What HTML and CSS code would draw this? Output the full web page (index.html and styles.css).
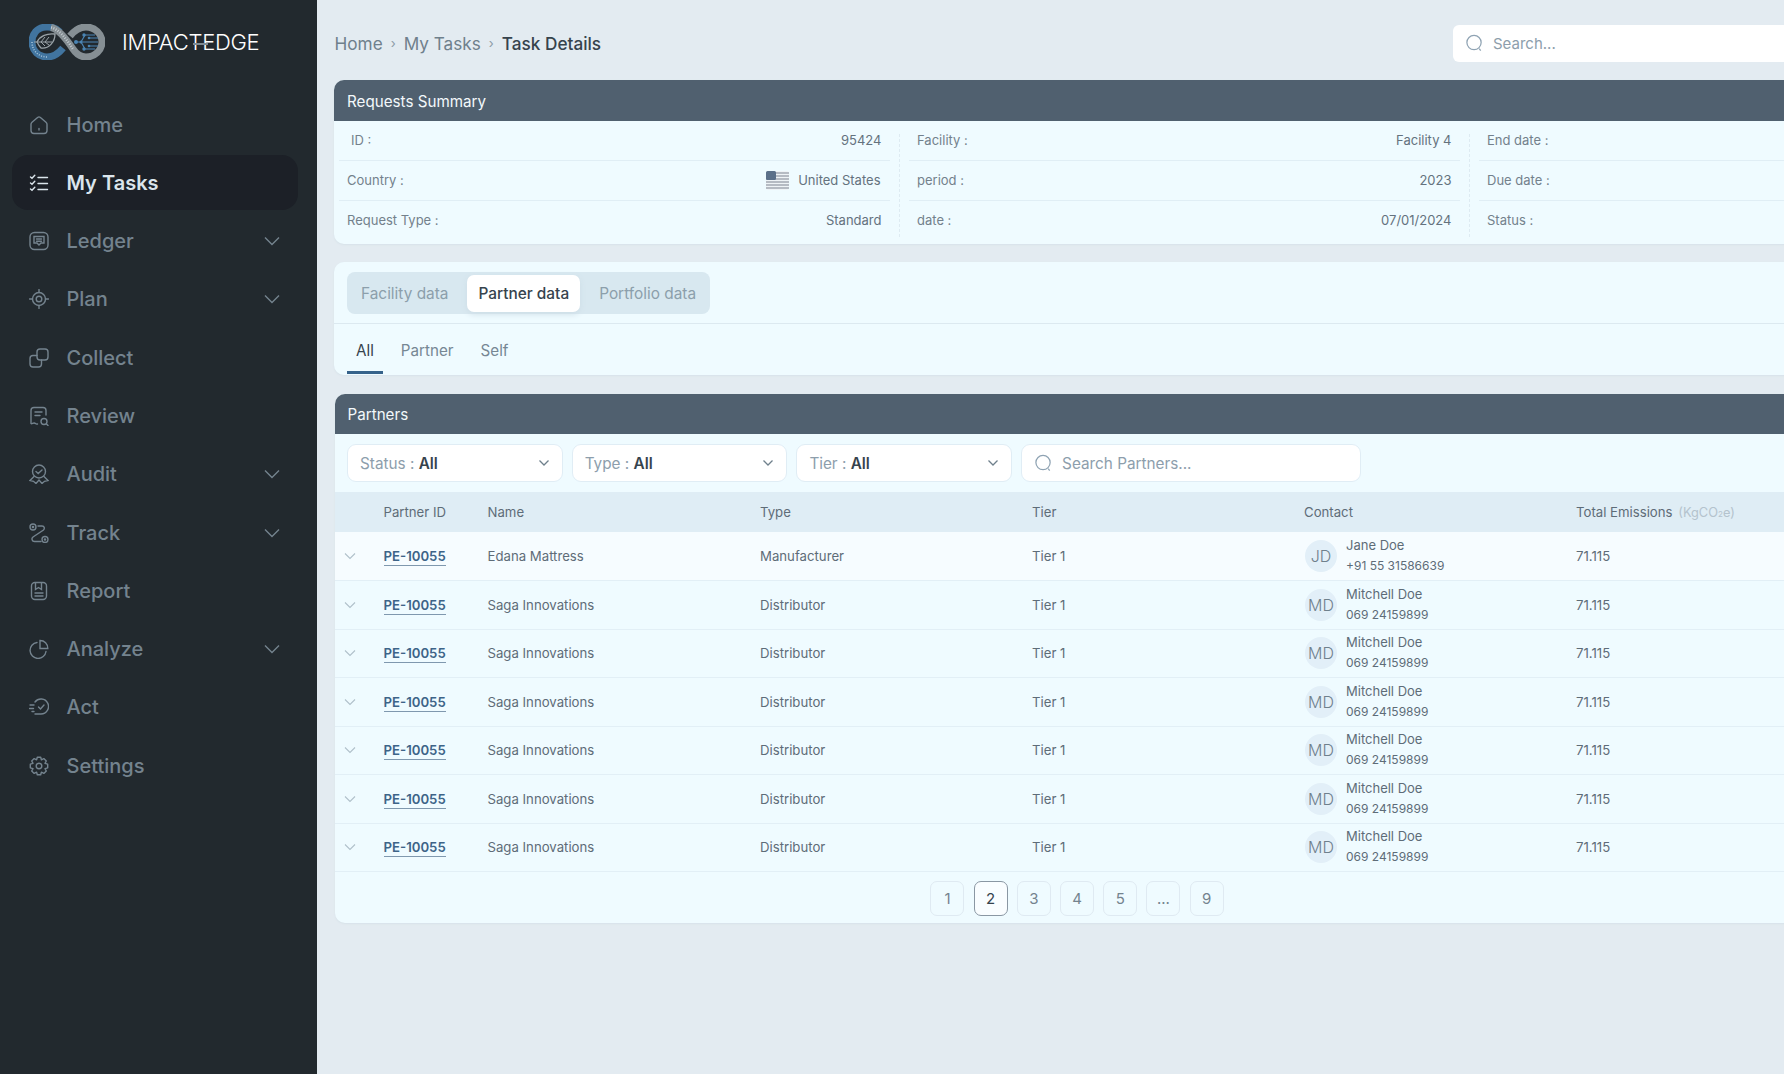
FILE: index.html
```html
<!DOCTYPE html>
<html lang="en">
<head>
<meta charset="utf-8">
<title>Task Details</title>
<link rel="stylesheet" href="styles.css">
</head>
<body>
<aside class="sidebar">
  <div class="brand">
    <svg class="logo" viewBox="0 0 76 36" fill="none">
      <path d="M31 8C27 4 22 2.500 17 3C8 3.500 3 10 3 18C3 27 10 33 18 33C25 33 30 29 34 24" stroke="#41749f" stroke-width="7"/>
      <path d="M22 3.500C30 5 38 16 44 25C48 31 52 33 57 33C66 33 73 26 73 18C73 10 66 3 57 3C50 3 45 7 41 12" stroke="#868f94" stroke-width="7"/>
      <path d="M22 3.500C30 5 38 16 44 25" stroke="#c3cbd0" stroke-width="2.500" stroke-dasharray="1 1.500"/>
      <path d="M3 18C3 27 10 33 18 33" stroke="#a9c6dc" stroke-width="1.500" stroke-dasharray="1 1.500"/>
      <path d="M8 18C11 12 18 9 26 10C26 18 20 25 12 24C10 22 9 20 8 18Z" stroke="#9aa3a8" stroke-width="1.300"/>
      <path d="M5 18H23M12 18L16 13M16 18L20 13M12 18L16 22M16 18L20 21" stroke="#9aa3a8" stroke-width="1"/>
      <path d="M47 18H69M52 18L56 11H66M52 18L56 25H66M59 14H69M59 22H69" stroke="#4a84b3" stroke-width="1.200"/>
      <g fill="#4a84b3"><circle cx="47" cy="18" r="2"/><circle cx="55" cy="11" r="1.700"/><circle cx="55" cy="25" r="1.700"/><circle cx="60" cy="14" r="1.300"/><circle cx="60" cy="22" r="1.300"/><circle cx="52" cy="18" r="1.500"/></g>
    </svg>
    <span class="brand-name">IMPACTEDGE</span>
  </div>
  <nav class="nav">
    <a class="nav-item"><svg class="nav-icon" viewBox="0 0 20 20"><path d="M2 9.200C2 8.300 2.400 7.700 3 7.200L8.600 2.500C9.400 1.800 10.600 1.800 11.400 2.500L17 7.200C17.600 7.700 18 8.300 18 9.200V15.500C18 17 17 18.500 15 18.500H5C3 18.500 2 17 2 15.500Z"/><path d="M10 13.500V15"/></svg><span>Home</span></a>
    <a class="nav-item is-active"><svg class="nav-icon" viewBox="0 0 20 20"><path d="M1.500 4L3 5.300 5.800 2.200M1.500 10L3 11.300 5.800 8.200M1.500 16L3 17.300 5.800 14.200M9 4.500H18.500M9 10.500H18.500M9 16.500H18.500"/></svg><span>My Tasks</span></a>
    <a class="nav-item"><svg class="nav-icon" viewBox="0 0 20 20"><rect x="1" y="1.500" width="18" height="17" rx="4.500"/><path d="M5 5.500H15V12H12L10 14 8 12H5ZM7.500 8H12.500M7.500 10.300H12.500"/></svg><span>Ledger</span><svg class="nav-caret" viewBox="0 0 16 10"><path d="M1 1.500L8 8.500 15 1.500"/></svg></a>
    <a class="nav-item"><svg class="nav-icon" viewBox="0 0 20 20"><circle cx="10" cy="10" r="6.500"/><circle cx="10" cy="10" r="2.800"/><path d="M10 .5V3.500M10 16.500V19.500M.5 10H3.500M16.500 10H19.500"/></svg><span>Plan</span><svg class="nav-caret" viewBox="0 0 16 10"><path d="M1 1.500L8 8.500 15 1.500"/></svg></a>
    <a class="nav-item"><svg class="nav-icon" viewBox="0 0 20 20"><rect x="8" y="1" width="11" height="11" rx="3"/><path d="M8 7.500H4C2 7.500 1 8.500 1 10.500V16C1 18 2 19 4 19H9.500C11.500 19 12.500 18 12.500 16V12"/></svg><span>Collect</span></a>
    <a class="nav-item"><svg class="nav-icon" viewBox="0 0 20 20"><path d="M17 9V4.500C17 2.500 16 1.500 14 1.500H5C3 1.500 2 2.500 2 4.500V17.500C3 18.500 4 16.500 5.500 17C6.500 17.300 7 18.500 8.500 18M6 6H13M6 9.500H11"/><circle cx="15" cy="15.500" r="3"/><path d="M17.500 18L19 19.500"/></svg><span>Review</span></a>
    <a class="nav-item"><svg class="nav-icon" viewBox="0 0 20 20"><circle cx="10" cy="7.500" r="6.500"/><path d="M7 7.500L9.200 9.500 13 6M5 12.500L1 16.500 4.500 17.300 7 19.500 10 16 13 19.500 15.500 17.300 19 16.500 15 12.500"/></svg><span>Audit</span><svg class="nav-caret" viewBox="0 0 16 10"><path d="M1 1.500L8 8.500 15 1.500"/></svg></a>
    <a class="nav-item"><svg class="nav-icon" viewBox="0 0 20 20"><circle cx="4" cy="4" r="3"/><circle cx="4" cy="4" r=".6"/><path d="M9 3H13C15.500 3 16 5.500 14.500 7L4 14C2 15.500 3 18.500 5.500 18.500H12"/><circle cx="16" cy="16.500" r="3"/><circle cx="16" cy="16.500" r=".6"/></svg><span>Track</span><svg class="nav-caret" viewBox="0 0 16 10"><path d="M1 1.500L8 8.500 15 1.500"/></svg></a>
    <a class="nav-item"><svg class="nav-icon" viewBox="0 0 20 20"><rect x="2.500" y="1.500" width="15" height="17" rx="3.500"/><path d="M6.500 2V8.500L9.500 6.500 12.500 8.500V2M6 12H14M6 15H14"/></svg><span>Report</span></a>
    <a class="nav-item"><svg class="nav-icon" viewBox="0 0 20 20"><path d="M8 3.500A8 8 0 1 0 17 12.500"/><path d="M11 1.500C15.500 1.500 18.800 4.800 18.800 9.500H11Z"/></svg><span>Analyze</span><svg class="nav-caret" viewBox="0 0 16 10"><path d="M1 1.500L8 8.500 15 1.500"/></svg></a>
    <a class="nav-item"><svg class="nav-icon" viewBox="0 0 20 20"><path d="M6 5A7.500 7.500 0 1 1 12 17H6M1 8H5M.5 11.500H4.500M3 14.500H5"/><path d="M9.500 10L11.500 12 15 8"/></svg><span>Act</span></a>
    <a class="nav-item"><svg class="nav-icon" viewBox="0 0 20 20"><circle cx="10" cy="10" r="2.800"/><path d="M8.300 1.300H11.700L12.400 3.800 14.800 2.600 17.300 5 16 7.400 18.700 8.200V11.800L16 12.600 17.300 15 14.800 17.400 12.400 16.200 11.700 18.700H8.300L7.600 16.200 5.200 17.400 2.700 15 4 12.600 1.300 11.800V8.200L4 7.400 2.700 5 5.200 2.600 7.600 3.800Z" stroke-linejoin="round"/></svg><span>Settings</span></a>
  </nav>
</aside>

<main class="main">
  <header class="topbar">
    <div class="crumbs">
      <span>Home</span><i>›</i><span>My Tasks</span><i>›</i><strong>Task Details</strong>
    </div>
    <div class="top-search">
      <svg class="search-icon" viewBox="0 0 20 20"><circle cx="9.500" cy="9.500" r="7.500"/><path d="M15 16L16.500 18"/></svg>
      <span>Search...</span>
    </div>
  </header>

  <section class="card">
    <h2 class="card-head">Requests Summary</h2>
    <div class="summary">
      <div class="sum-col">
        <div class="sum-row sum-first"><span>ID :</span><b>95424</b></div>
        <div class="sum-row"><span>Country :</span><b class="country"><svg class="flag" viewBox="0 0 23 19"><rect width="23" height="19" rx="2.500" fill="#eef3f6"/><path d="M0 2H23M0 5H23M0 8H23M0 11H23M0 14H23M0 17H23" stroke="#a3a9b2" stroke-width="1.500"/><rect width="10" height="9" rx="1.500" fill="#5b7089"/></svg>United States</b></div>
        <div class="sum-row"><span>Request Type :</span><b>Standard</b></div>
      </div>
      <div class="sum-col">
        <div class="sum-row"><span>Facility :</span><b>Facility 4</b></div>
        <div class="sum-row"><span>period :</span><b>2023</b></div>
        <div class="sum-row"><span>date :</span><b>07/01/2024</b></div>
      </div>
      <div class="sum-col sum-last">
        <div class="sum-row"><span>End date :</span></div>
        <div class="sum-row"><span>Due date :</span></div>
        <div class="sum-row"><span>Status :</span></div>
      </div>
    </div>
  </section>

  <section class="card tabs-card">
    <div class="seg-wrap">
      <div class="seg">
        <span>Facility data</span>
        <span class="seg-on">Partner data</span>
        <span>Portfolio data</span>
      </div>
    </div>
    <div class="subtabs">
      <span class="sub-on">All</span><span>Partner</span><span>Self</span>
    </div>
  </section>

  <section class="card partners">
    <h2 class="card-head">Partners</h2>
    <div class="filters">
      <div class="filter">Status :&nbsp;<b>All</b><svg class="chev" viewBox="0 0 12 8"><path d="M1.500 1.500L6 6 10.500 1.500"/></svg></div>
      <div class="filter">Type :&nbsp;<b>All</b><svg class="chev" viewBox="0 0 12 8"><path d="M1.500 1.500L6 6 10.500 1.500"/></svg></div>
      <div class="filter">Tier :&nbsp;<b>All</b><svg class="chev" viewBox="0 0 12 8"><path d="M1.500 1.500L6 6 10.500 1.500"/></svg></div>
      <div class="filter filter-search"><svg class="search-icon" viewBox="0 0 20 20"><circle cx="9.500" cy="9.500" r="7.500"/><path d="M15 16L16.500 18"/></svg>Search Partners...</div>
    </div>
    <table class="grid">
      <thead>
        <tr><th class="c-x"></th><th class="c-id">Partner ID</th><th class="c-name">Name</th><th class="c-col">Type</th><th class="c-col">Tier</th><th class="c-col">Contact</th><th>Total Emissions <em>(KgCO<small>2</small>e)</em></th></tr>
      </thead>
      <tbody>
        <tr><td><svg class="row-chev" viewBox="0 0 12 8"><path d="M1 1.500L6 6.500 11 1.500"/></svg></td><td><a class="pid">PE-10055</a></td><td>Edana Mattress</td><td>Manufacturer</td><td>Tier 1</td><td><div class="contact"><span class="avatar">JD</span><div><p>Jane Doe</p><p class="phone">+91 55 31586639</p></div></div></td><td>71.115</td></tr>
        <tr><td><svg class="row-chev" viewBox="0 0 12 8"><path d="M1 1.500L6 6.500 11 1.500"/></svg></td><td><a class="pid">PE-10055</a></td><td>Saga Innovations</td><td>Distributor</td><td>Tier 1</td><td><div class="contact"><span class="avatar">MD</span><div><p>Mitchell Doe</p><p class="phone">069 24159899</p></div></div></td><td>71.115</td></tr>
        <tr><td><svg class="row-chev" viewBox="0 0 12 8"><path d="M1 1.500L6 6.500 11 1.500"/></svg></td><td><a class="pid">PE-10055</a></td><td>Saga Innovations</td><td>Distributor</td><td>Tier 1</td><td><div class="contact"><span class="avatar">MD</span><div><p>Mitchell Doe</p><p class="phone">069 24159899</p></div></div></td><td>71.115</td></tr>
        <tr><td><svg class="row-chev" viewBox="0 0 12 8"><path d="M1 1.500L6 6.500 11 1.500"/></svg></td><td><a class="pid">PE-10055</a></td><td>Saga Innovations</td><td>Distributor</td><td>Tier 1</td><td><div class="contact"><span class="avatar">MD</span><div><p>Mitchell Doe</p><p class="phone">069 24159899</p></div></div></td><td>71.115</td></tr>
        <tr><td><svg class="row-chev" viewBox="0 0 12 8"><path d="M1 1.500L6 6.500 11 1.500"/></svg></td><td><a class="pid">PE-10055</a></td><td>Saga Innovations</td><td>Distributor</td><td>Tier 1</td><td><div class="contact"><span class="avatar">MD</span><div><p>Mitchell Doe</p><p class="phone">069 24159899</p></div></div></td><td>71.115</td></tr>
        <tr><td><svg class="row-chev" viewBox="0 0 12 8"><path d="M1 1.500L6 6.500 11 1.500"/></svg></td><td><a class="pid">PE-10055</a></td><td>Saga Innovations</td><td>Distributor</td><td>Tier 1</td><td><div class="contact"><span class="avatar">MD</span><div><p>Mitchell Doe</p><p class="phone">069 24159899</p></div></div></td><td>71.115</td></tr>
        <tr><td><svg class="row-chev" viewBox="0 0 12 8"><path d="M1 1.500L6 6.500 11 1.500"/></svg></td><td><a class="pid">PE-10055</a></td><td>Saga Innovations</td><td>Distributor</td><td>Tier 1</td><td><div class="contact"><span class="avatar">MD</span><div><p>Mitchell Doe</p><p class="phone">069 24159899</p></div></div></td><td>71.115</td></tr>
      </tbody>
    </table>
    <div class="pager">
      <span>1</span><span class="page-on">2</span><span>3</span><span>4</span><span>5</span><span>...</span><span>9</span>
    </div>
  </section>
</main>
</body>
</html>
```

FILE: styles.css
```css
* { box-sizing: border-box; }
html, body { margin: 0; height: 100%; }
body {
  display: flex;
  width: 1784px;
  height: 1074px;
  overflow: hidden;
  background: #e3ebf1;
  font-family: Inter, "Noto Sans", sans-serif;
  color: #5e6c78;
}

/* Sidebar */
.sidebar { flex: 0 0 317px; background: #22292e; padding: 24px 19px 0 12px; }
.brand { display: flex; align-items: center; height: 36px; padding-left: 17px; }
.logo { width: 76px; height: 36px; flex: none; }
.brand-name { position: relative; margin-left: 17px; font-size: 22px; font-weight: 300; color: #fff; letter-spacing: -.3px; white-space: nowrap; }
.brand-name::after { content: ""; position: absolute; left: 71px; top: 14px; width: 15px; height: 2px; background: #7d8a93; }
.nav { display: flex; flex-direction: column; gap: 3.300px; margin-top: 37px; }
.nav-item {
  display: flex; align-items: center;
  height: 55px; padding: 0 18px 0 17px;
  border-radius: 16px;
  font-size: 20px; font-weight: 500;
  color: #74838e;
}
.nav-item span { margin-left: 17.500px; }
.nav-icon { width: 20px; height: 20px; flex: none; fill: none; stroke: #74838e; stroke-width: 1.400; stroke-linecap: round; }
.nav-caret { width: 16px; height: 10px; margin-left: auto; fill: none; stroke: #74838e; stroke-width: 1.400; }
.is-active { background: #1c2027; color: #dbe5ec; font-weight: 600; }
.is-active .nav-icon { stroke: #dbe5ec; }

/* Main */
.main { flex: 1; min-width: 0; overflow: hidden; padding-left: 17px; }
.main > * { width: 1484px; }
.topbar { display: flex; align-items: center; justify-content: space-between; height: 80px; padding-top: 6px; }
.crumbs { display: flex; align-items: center; font-size: 17.200px; color: #6f808c; margin-left: .5px; }
.crumbs i { font-style: normal; font-size: 13px; margin: 0 8px; color: #8b9ba6; }
.crumbs strong { font-weight: 500; color: #36434d; }
.top-search {
  display: flex; align-items: center; gap: 9px;
  width: 365px; height: 37px; padding: 0 12px;
  background: #fff; border-radius: 6px;
  font-size: 15px; color: #8d9eac;
}
.search-icon { width: 19px; height: 20px; flex: none; fill: none; stroke: #8fa3b3; stroke-width: 1.300; }

.card { background: #effbff; border-radius: 10px; overflow: hidden; box-shadow: 0 1px 2px #d7e2e9; }
.card-head {
  margin: 0; height: 41px; padding: 1px 13px 0;
  display: flex; align-items: center;
  background: #50606f; color: #f3f8fb;
  font-size: 15.200px; font-weight: 400;
}

/* Summary */
.summary { display: grid; grid-template-columns: 566px 570px 1fr; height: 123px; }
.sum-col { padding: 0 10px 13px 5px; position: relative; }
.sum-col + .sum-col { padding-left: 9px; }
.sum-col::after { content: ""; position: absolute; right: 0; top: 13px; bottom: 17px; border-right: 1px dashed #deebf2; }
.sum-last::after { display: none; }
.sum-row {
  display: flex; align-items: center; justify-content: space-between;
  height: 40px; padding: 0 8.500px 1px 8px;
  border-bottom: 1px solid #e0eef5;
  font-size: 13px; color: #73818c;
}
.sum-row:last-child { border-bottom: 0; padding-bottom: 3px; }
.sum-first { padding-left: 12px; }
.sum-row b { font-weight: 400; color: #64727e; }
.country { display: flex; align-items: center; gap: 9px; margin-right: 1px; }
.flag { width: 23px; height: 19px; margin-left: -1px; }

/* Tabs */
.tabs-card { margin-top: 18px; height: 113px; }
.seg-wrap { height: 62px; padding: 10px 13px 0; border-bottom: 1px solid #dce9f0; }
.seg {
  display: inline-flex; align-items: center; gap: 8px;
  height: 42px; padding: 0 3px;
  background: #d8e8f0; border-radius: 8px;
  font-size: 15.400px; color: #8c9fab;
}
.seg span { padding: 0 11px; height: 37px; display: flex; align-items: center; }
.seg .seg-on { background: #fff; color: #36434d; font-weight: 500; border-radius: 7px; box-shadow: 0 2px 6px #cddde6; }
.subtabs { display: flex; height: 50px; padding-left: 13px; font-size: 15.200px; color: #768794; }
.subtabs span { padding: 2px 9px 0; display: flex; align-items: center; margin-right: 9px; }
.subtabs .sub-on { color: #36434d; border-bottom: 3px solid #35628a; padding-top: 5px; }

/* Partners */
.partners { margin: 19px 0 0 1px; width: 1484px; }
.partners .card-head { height: 40px; padding-left: 12.500px; }
.filters { display: flex; gap: 9.200px; height: 58px; padding: 10px 12px 0; }
.filter {
  display: flex; align-items: center;
  flex: 0 0 215.500px; height: 38px; padding: 0 12px;
  background: #fff; border: 1px solid #e0edf5; border-radius: 9px;
  font-size: 15.300px; color: #8d9eac;
}
.filter b { font-weight: 600; color: #36434d; }
.chev { width: 12px; height: 8px; margin-left: auto; fill: none; stroke: #6f808c; stroke-width: 1.300; }
.filter-search { flex-basis: 340px; gap: 9px; }

.grid { width: 100%; border-collapse: collapse; table-layout: fixed; font-size: 13.200px; }
.grid th {
  height: 40px; padding: 0; text-align: left;
  background: #dfedf5; font-weight: 400; color: #5e6c78;
}
.grid td { height: 48.500px; padding: 0; border-bottom: 1px solid #e2eff6; color: #5e6c78; }
.grid tbody tr:first-child { background: #f6fcff; }
.c-x { width: 48.500px; }
.c-id { width: 104px; }
.c-name { width: 272.500px; }
.c-col { width: 272px; }
.grid em { font-style: normal; color: #b4c3cd; font-size: 12.800px; margin-left: 2px; }
.grid small { font-size: 8px; }
.row-chev { display: block; width: 12px; height: 8px; margin-left: 9px; fill: none; stroke: #b0c0ca; stroke-width: 1.100; }
.pid { font-weight: 600; color: #3d6488; border-bottom: 1px solid #7f98ae; padding-bottom: 1px; }
.contact { display: flex; align-items: center; gap: 9px; margin-left: 1px; }
.avatar {
  flex: none; display: flex; align-items: center; justify-content: center;
  width: 32px; height: 32px; border-radius: 50%;
  background: #e2eff8; color: #6f808c; font-size: 16px; font-weight: 300;
}
.contact > div { margin-top: -1px; }
.contact p { margin: 0; line-height: 20px; font-size: 13px; }
.contact .phone { font-size: 12px; margin-top: 1px; }

.pager { display: flex; justify-content: center; gap: 9.200px; height: 51px; padding-top: 9px; font-size: 15px; color: #74838e; }
.pager span {
  display: flex; align-items: center; justify-content: center;
  width: 34px; height: 35px;
  border: 1px solid #dfeaf2; border-radius: 7px;
}
.pager .page-on { border-color: #8a97a3; color: #36434d; background: #f9fdff; }
```
